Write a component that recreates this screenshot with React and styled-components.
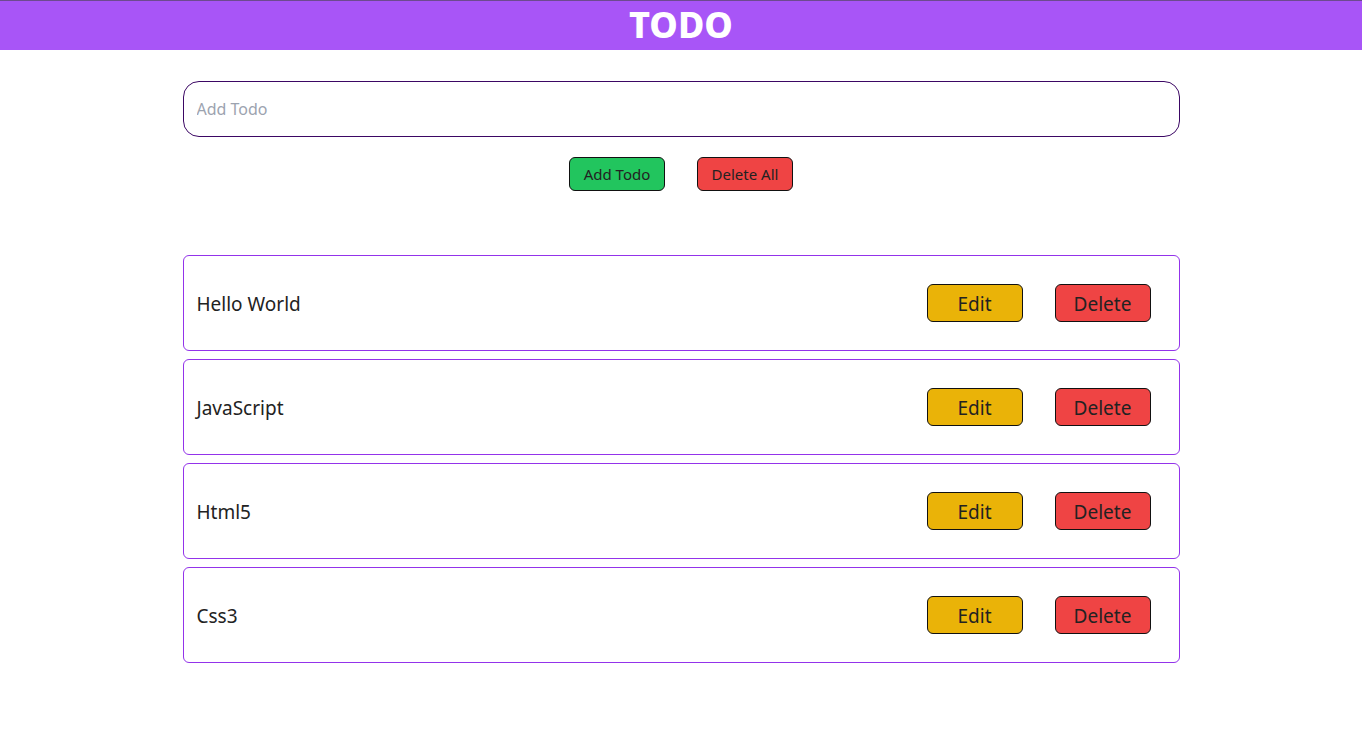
import React, { useState } from 'react'
import styled, { createGlobalStyle } from 'styled-components'

const GlobalStyle = createGlobalStyle`
    body {
        margin: 0;
        font-family: "Noto Sans", "Open Sans", sans-serif;
        background: #fff;
        color: #222;
    }
`

const Header = styled.header`
    height: 50px;
    box-sizing: border-box;
    border-top: 1px solid #6d4a8f;
    background-color: #a855f7;
    display: flex;
    align-items: center;
    justify-content: center;
`

const Title = styled.h1`
    margin: 0 0 2px;
    color: #fff;
    font-size: 36px;
    font-weight: 800;
    line-height: 1;
`

const Main = styled.main`
    width: 997px;
    margin: 0 auto;
    padding-top: 31px;
`

const Field = styled.input`
    box-sizing: border-box;
    width: 100%;
    height: 56px;
    padding: 0 13px;
    border: 1px solid #3b0764;
    border-radius: 16px;
    font-family: inherit;
    font-size: 16px;
    outline: none;

    &::placeholder {
        color: #9ca3af;
    }
`

const Actions = styled.div`
    display: flex;
    justify-content: center;
    gap: 32px;
    margin-top: 20px;
`

const Button = styled.button`
    box-sizing: border-box;
    width: 96px;
    height: ${({ $big }) => $big ? '38px' : '34px'};
    border: 1px solid #111;
    border-radius: 6px;
    background-color: ${({ $color }) => $color};
    color: #222;
    font-family: inherit;
    font-size: ${({ $big }) => $big ? '19px' : '15px'};
    cursor: pointer;
    padding: ${({ $big }) => $big ? '2px 0 0' : '0'};
`

const List = styled.ul`
    list-style: none;
    margin: 64px 0 0;
    padding: 0;
    display: flex;
    flex-direction: column;
    gap: 8px;
`

const Item = styled.li`
    box-sizing: border-box;
    height: 96px;
    border: 1px solid #9333ea;
    border-radius: 6px;
    padding: 0 28px 0 13px;
    display: flex;
    align-items: center;
    gap: 32px;
`

const Text = styled.span`
    flex: 1;
    font-size: 19px;
    padding-top: 2px;
`

const colors = { green: '#22c55e', red: '#ef4444', yellow: '#eab308' }

export default function App()
{
    const [todos] = useState(['Hello World', 'JavaScript', 'Html5', 'Css3'])

    return (
        <>
            <GlobalStyle />
            <Header>
                <Title>TODO</Title>
            </Header>
            <Main>
                <Field type='text' placeholder='Add Todo' autoFocus />
                <Actions>
                    <Button $color={colors.green}>Add Todo</Button>
                    <Button $color={colors.red}>Delete All</Button>
                </Actions>
                <List>
                    {todos.map(todo => (
                        <Item key={todo}>
                            <Text>{todo}</Text>
                            <Button $big $color={colors.yellow}>Edit</Button>
                            <Button $big $color={colors.red}>Delete</Button>
                        </Item>
                    ))}
                </List>
            </Main>
        </>
    )
}
